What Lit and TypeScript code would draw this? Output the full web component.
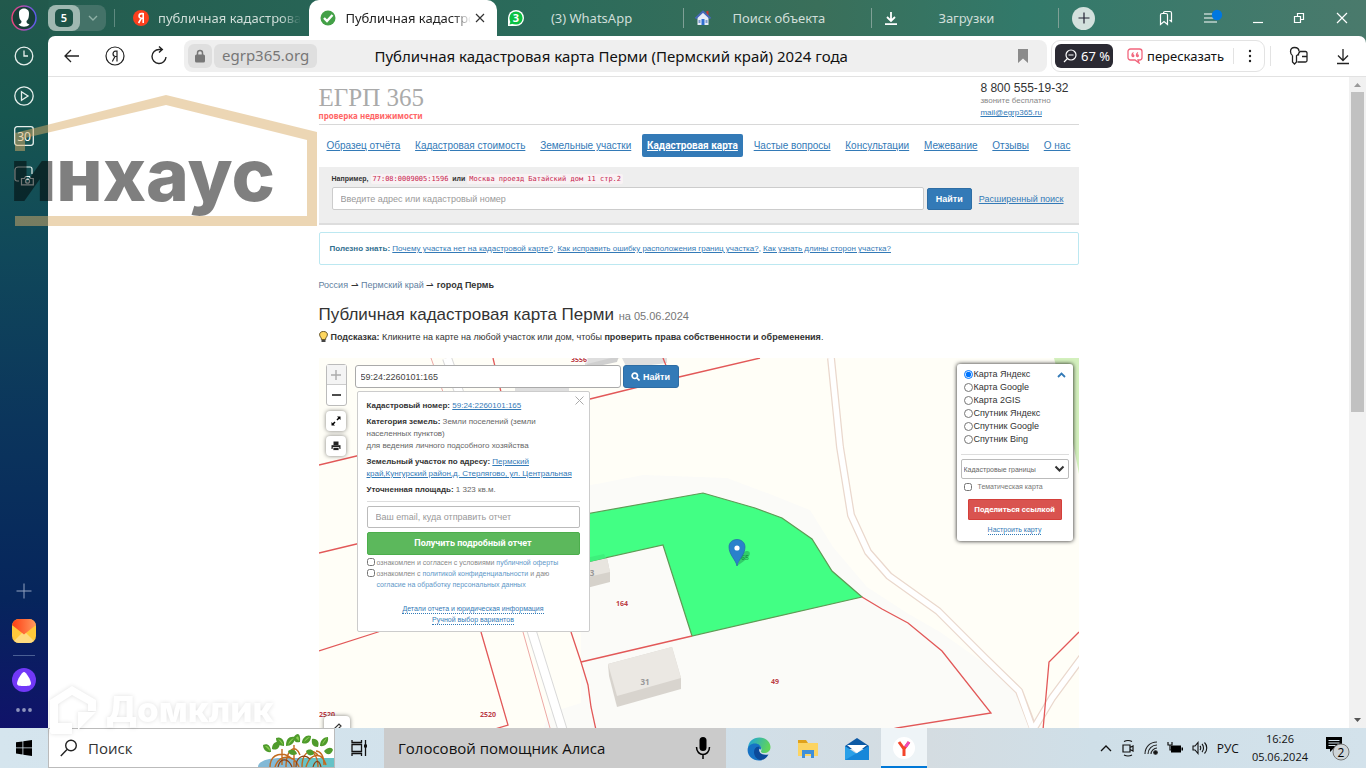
import { html, svg, css, LitElement } from 'lit';
import { customElement, state } from 'lit/decorators.js';

interface Tab {
  label: string;
  icon: any;
  active?: boolean;
  long?: boolean;
}

const base = css`
  * {
    box-sizing: border-box;
  }

  button {
    font: inherit;
    color: inherit;
    background: none;
    border: 0;
    padding: 0;
    margin: 0;
  }

  input,
  select {
    font: inherit;
    margin: 0;
  }

  svg {
    display: block;
    flex: none;
  }
`;

const yandexIcon = html`
  <svg width="18" height="18" viewBox="0 0 18 18">
    <circle cx="9" cy="9" r="8" fill="#fc3f1d" />
    <path d="M11.2 4v10M11.2 4.6H9.4c-3 0-3.2 4.6 0 4.6h1.8M9.4 9.2 6.6 14" fill="none" stroke="#fff" stroke-width="1.6" />
  </svg>
`;

const checkIcon = html`
  <svg width="18" height="18" viewBox="0 0 18 18">
    <circle cx="9" cy="9" r="7.5" fill="#43a047" />
    <path d="m5 9 3 3 5.5-6" fill="none" stroke="#fff" stroke-width="2.4" />
  </svg>
`;

const whatsappIcon = html`
  <svg width="18" height="18" viewBox="0 0 18 18">
    <path d="M1 17V9a8 8 0 1 1 8 8z" fill="#fff" />
    <circle cx="9" cy="9" r="6.6" fill="#0cc143" />
    <path d="M2.500 15.500 4 11l3 3.500z" fill="#0cc143" />
    <text x="9" y="13" text-anchor="middle" font-family="Noto Sans" font-size="11" font-weight="700" fill="#fff">3</text>
  </svg>
`;

const houseIcon = html`
  <svg width="18" height="18" viewBox="0 0 18 18">
    <path d="M12.500 2h2v5h-2z" fill="#c33" />
    <path d="M3.500 8 9 3l5.500 5v8h-11z" fill="#e6ecf7" />
    <path d="M7.500 10h3v6h-3z" fill="#2f6fd0" />
    <path d="m1.500 9.500 7.500-7 7.500 7" fill="none" stroke="#4668b8" stroke-width="2" />
    <path d="M4.500 11h2v3h-2zM11.500 11h2v3h-2z" fill="#7d9ad0" />
  </svg>
`;

const loadIcon = html`
  <svg width="18" height="18" viewBox="0 0 18 18" fill="none" stroke="#fff" stroke-width="1.8">
    <path d="M9 3v8.500M5 8l4 4 4-4M3 15.200h12" />
  </svg>
`;

@customElement('tab-strip')
export class TabStrip extends LitElement {
  tabs: Tab[] = [
    { label: 'публичная кадастровая карта', icon: yandexIcon, long: true },
    { label: 'Публичная кадастровая карта', icon: checkIcon, active: true },
    { label: '(3) WhatsApp', icon: whatsappIcon },
    { label: 'Поиск объекта', icon: houseIcon },
    { label: 'Загрузки', icon: loadIcon },
  ];

  static styles = [
    base,
    css`
      :host {
        display: flex;
        align-items: center;
        height: 36px;
        font: 13px 'Noto Sans', sans-serif;
        color: #cfded9;
      }

      .avatar {
        width: 48px;
        display: flex;
        justify-content: center;
      }

      .group {
        display: flex;
        align-items: center;
        width: 58px;
        height: 26px;
        border-radius: 8px;
        background: #447268;
      }

      .count {
        width: 32px;
        height: 26px;
        display: grid;
        place-items: center;
        border-radius: 8px;
        background: #9fb8b1;
      }

      .badge {
        width: 18px;
        height: 18px;
        border-radius: 5px;
        background: #1d5347;
        color: #fff;
        font-size: 11px;
        font-weight: 600;
        line-height: 18px;
        text-align: center;
      }

      .more {
        flex: 1;
        display: flex;
        justify-content: center;
      }

      .tabs {
        display: flex;
        flex: 0 1 945px;
        min-width: 0;
        height: 36px;
        margin-left: 8px;
        padding-left: 8px;
        background: linear-gradient(#5f8a80, #5f8a80) left center / 1px 18px no-repeat;
      }

      .tab {
        flex: 1;
        min-width: 0;
        display: flex;
        align-items: center;
        gap: 8px;
        padding: 0 8px 0 10px;
        background: linear-gradient(#7fa096, #7fa096) right center / 1px 20px no-repeat;
      }

      .tab.long,
      .tab.active {
        background: none;
      }

      .label {
        flex: 1;
        min-width: 0;
        margin-right: 26px;
        overflow: hidden;
        white-space: nowrap;
        text-align: center;
      }

      .tab.long .label,
      .tab.active .label {
        margin-right: 0;
        text-align: left;
        mask-image: linear-gradient(90deg, #000 86%, transparent);
      }

      .tab.active .label {
        margin-right: -8px;
      }

      .tab.active {
        background: #fff;
        color: #222;
        border-radius: 10px 10px 0 0;
      }

      .plus {
        margin-left: 13px;
        width: 23px;
        height: 23px;
        border-radius: 12px;
        background: #d3e1dd;
        display: grid;
        place-items: center;
      }

      .window {
        margin-left: auto;
        display: flex;
        align-items: center;
        padding-right: 16px;
        gap: 29px;
      }
    `,
  ];

  render() {
    return html`
      <button class="avatar" aria-label="Профиль">
        <svg width="28" height="28" viewBox="0 0 28 28">
          <defs>
            <linearGradient id="ring"><stop stop-color="#f0457a" /><stop offset="1" stop-color="#5a5cf0" /></linearGradient>
          </defs>
          <circle cx="14" cy="14" r="12" fill="#173f38" stroke="url(#ring)" stroke-width="1.400" />
          <path d="M9 9c0-6 10-6 10 0 0 5-1 7-2.500 8 0 2 .5 2.500 3 3.500-3 3-8 3-11 0 2.500-1 3-1.500 3-3.500C10 16 9 14 9 9z" fill="#fff" />
        </svg>
      </button>
      <div class="group">
        <button class="count"><span class="badge">5</span></button>
        <button class="more" aria-label="Группы вкладок">
          <svg width="10" height="6" viewBox="0 0 10 6" fill="none" stroke="#8fb0a6" stroke-width="1.400"><path d="m1 1 4 4 4-4" /></svg>
        </button>
      </div>
      <div class="tabs">
        ${this.tabs.map(
          (tab) => html`
            <button class="tab ${tab.active ? 'active' : ''} ${tab.long ? 'long' : ''}">
              ${tab.icon}
              <span class="label">${tab.label}</span>
              ${tab.active
                ? html`<svg width="18" height="18" viewBox="0 0 18 18" stroke="#333" stroke-width="1.200"><path d="m5 5 8 8M13 5l-8 8" /></svg>`
                : ''}
            </button>
          `
        )}
      </div>
      <button class="plus" aria-label="Новая вкладка">
        <svg width="12" height="12" viewBox="0 0 12 12" stroke="#223" stroke-width="1.200"><path d="M6 .5v11M.5 6h11" /></svg>
      </button>
      <div class="window">
        <button aria-label="Закладки">
          <svg width="16" height="16" viewBox="0 0 16 16" fill="none" stroke="#fff" stroke-width="1.200">
            <path d="M2.500 5c0-1 .5-1.500 1.500-1.500h4c1 0 1.500.5 1.500 1.500v9.500L6 11.500l-3.500 3z" />
            <path d="M5.500 3.500c0-1.300.7-2 1.700-2H12c1 0 1.500.5 1.500 1.500v8.500l-2-1.500" />
          </svg>
        </button>
        <button aria-label="Меню">
          <svg width="20" height="18" viewBox="0 0 20 18" fill="none" stroke="#fff" stroke-width="1.200">
            <path d="M1 5h9M1 9h11M1 13h13" />
            <circle cx="14" cy="6" r="5.200" fill="#0077e0" stroke="none" />
          </svg>
        </button>
        <button aria-label="Свернуть">
          <svg width="12" height="12" viewBox="0 0 12 12" stroke="#fff" stroke-width="1.200"><path d="M1 10.500h10" /></svg>
        </button>
        <button aria-label="Развернуть">
          <svg width="12" height="12" viewBox="0 0 12 12" fill="none" stroke="#fff" stroke-width="1.200">
            <path d="M1.500 4.500h6v6h-6zM4.500 4.500v-3h6v6h-3" />
          </svg>
        </button>
        <button aria-label="Закрыть">
          <svg width="16" height="14" viewBox="0 0 16 14" stroke="#fff" stroke-width="1.200"><path d="m3 2 10 10M13 2 3 12" /></svg>
        </button>
      </div>
    `;
  }
}

@customElement('side-rail')
export class SideRail extends LitElement {
  static styles = [
    base,
    css`
      :host {
        display: flex;
        flex-direction: column;
        align-items: center;
        width: 48px;
        padding: 10px 0 12px;
      }

      .top {
        display: flex;
        flex-direction: column;
        gap: 20px;
      }

      .bottom {
        margin-top: auto;
        display: flex;
        flex-direction: column;
        align-items: center;
        gap: 12px;
      }

      .plus {
        margin-bottom: 8px;
      }

      .rule {
        width: 22px;
        height: 1px;
        background: #4a5f94;
      }
    `,
  ];

  render() {
    return html`
      <div class="top">
        <button aria-label="История">
          <svg width="20" height="20" viewBox="0 0 20 20" fill="none" stroke="#e6efec" stroke-width="1.300">
            <circle cx="10" cy="10" r="8.800" /><path d="M10 4.500V10h4" />
          </svg>
        </button>
        <button aria-label="Видео">
          <svg width="20" height="20" viewBox="0 0 20 20" fill="none" stroke="#e6efec" stroke-width="1.300">
            <circle cx="10" cy="10" r="9.200" /><path d="m7.500 5.800 6.500 4.200-6.500 4.200z" />
          </svg>
        </button>
        <button aria-label="Календарь">
          <svg width="20" height="20" viewBox="0 0 20 20" fill="none" stroke="#e6efec" stroke-width="1.300">
            <rect x=".7" y=".7" width="18.600" height="18.600" rx="2.500" />
            <text x="10" y="14.500" text-anchor="middle" font-family="Noto Sans" font-size="12" stroke="none" fill="#fff">30</text>
          </svg>
        </button>
        <button aria-label="Скриншот">
          <svg width="20" height="20" viewBox="0 0 20 20" fill="none" stroke="#e6efec" stroke-width="1.200">
            <path d="M5 15H3a2 2 0 0 1-2-2V4a3 3 0 0 1 3-3h12a2 2 0 0 1 2 2v5" />
            <path d="M7.500 12.500h3l1-2h4l1 2h2.800v6.300H7.500z" /><circle cx="13.500" cy="15.200" r="2" />
          </svg>
        </button>
      </div>
      <div class="bottom">
        <button class="plus" aria-label="Добавить">
          <svg width="16" height="16" viewBox="0 0 16 16" stroke="#93a3c0"><path d="M8 .5v15M.5 8h15" /></svg>
        </button>
        <button aria-label="Почта">
          <svg width="24" height="24" viewBox="0 0 24 24">
            <defs>
              <linearGradient id="flap" x2="1"><stop stop-color="#ff3d12" /><stop offset="1" stop-color="#ff9a60" /></linearGradient>
              <clipPath id="mail"><rect width="24" height="24" rx="7" /></clipPath>
            </defs>
            <g clip-path="url(#mail)">
              <path d="M0 0h24v24H0z" fill="#ffc83a" />
              <path d="m0 24 12-12 12 12z" fill="#ffdb80" />
              <path d="M0 0h24v6L12 15.500 0 6z" fill="url(#flap)" />
            </g>
          </svg>
        </button>
        <span class="rule"></span>
        <button aria-label="Алиса">
          <svg width="24" height="24" viewBox="0 0 24 24">
            <circle cx="12" cy="12" r="12" fill="#7138f8" />
            <path d="M12 4c2 0 7 8 7 11.500C19 18 15.500 18 12 18s-7 0-7-2.500C5 12 10 4 12 4z" fill="#fff" />
          </svg>
        </button>
        <button aria-label="Ещё">
          <svg width="16" height="12" viewBox="0 0 16 12" fill="#8e94bd">
            <circle cx="2" cy="6" r="1.900" /><circle cx="8" cy="6" r="1.900" /><circle cx="14" cy="6" r="1.900" />
          </svg>
        </button>
      </div>
    `;
  }
}

@customElement('address-bar')
export class AddressBar extends LitElement {
  static styles = [
    base,
    css`
      :host {
        display: flex;
        align-items: center;
        height: 41px;
        padding: 0 15px;
        border-bottom: 1px solid #e2e2e2;
        font: 15px 'Noto Sans', sans-serif;
        color: #111;
      }

      .nav {
        display: flex;
        align-items: center;
        gap: 24px;
        width: 121px;
      }

      .field {
        flex: 1;
        min-width: 0;
        display: flex;
        align-items: center;
        height: 32px;
        padding: 0 18px 0 4px;
        border-radius: 8px;
        background: #efefef;
      }

      .lock {
        width: 24px;
        height: 24px;
        display: grid;
        place-items: center;
        border-radius: 6px;
        background: #dfdfdf;
      }

      .host {
        height: 24px;
        margin-left: 2px;
        padding: 0 8px;
        border-radius: 6px;
        background: #dfdfdf;
        color: #777;
        line-height: 23px;
      }

      .title {
        flex: 1;
        padding-right: 112px;
        overflow: hidden;
        white-space: nowrap;
        text-align: center;
      }

      .tools {
        display: flex;
        align-items: center;
        height: 32px;
        margin-left: 4px;
        padding: 0 11px 0 3px;
        border: 1px solid #e3e3e3;
        border-radius: 9px;
        font-size: 13px;
      }

      .zoom {
        display: flex;
        align-items: center;
        gap: 4px;
        height: 24px;
        width: 58px;
        padding: 0 5px 0 8px;
        border-radius: 6px;
        background: #2b2a33;
        color: #fff;
        white-space: nowrap;
      }

      .retell {
        display: flex;
        align-items: center;
        gap: 4px;
        margin-left: 14px;
      }

      .dots {
        margin-left: 9px;
        padding-left: 13px;
        border-left: 1px solid #e3e3e3;
      }

      .right {
        display: flex;
        align-items: center;
        gap: 26px;
        margin-left: 5px;
        padding-left: 18px;
        border-left: 1px solid #e3e3e3;
      }
    `,
  ];

  render() {
    return html`
      <div class="nav">
        <button aria-label="Назад">
          <svg width="18" height="18" viewBox="0 0 18 18" fill="none" stroke="#222" stroke-width="1.300"><path d="M16 9H2M8 3 2 9l6 6" /></svg>
        </button>
        <button aria-label="Яндекс">
          <svg width="20" height="20" viewBox="0 0 20 20" fill="none" stroke="#222" stroke-width="1.200">
            <circle cx="10" cy="10" r="9" /><path d="M12 4.500v11M12 5.200h-1.500c-3.300 0-3.300 5.300 0 5.300H12M10 10.500l-2.700 5" />
          </svg>
        </button>
        <button aria-label="Обновить">
          <svg width="20" height="20" viewBox="0 0 20 20" fill="none" stroke="#222" stroke-width="1.400">
            <path d="M17 11a7 7 0 1 1-7-7.500h3M10 .5l3.300 3L10 6.500" />
          </svg>
        </button>
      </div>
      <div class="field">
        <button class="lock" aria-label="Защита">
          <svg width="12" height="14" viewBox="0 0 12 14">
            <rect x="1" y="5.500" width="10" height="8" rx="1.500" fill="#777" />
            <path d="M3.500 6V4a2.500 2.500 0 0 1 5 0v2" fill="none" stroke="#777" stroke-width="1.500" />
          </svg>
        </button>
        <span class="host">egrp365.org</span>
        <span class="title">Публичная кадастровая карта Перми (Пермский край) 2024 года</span>
        <button aria-label="В закладки">
          <svg width="12" height="14" viewBox="0 0 12 14"><path d="M1 0h10v14l-5-4.500L1 14z" fill="#8b8b8b" /></svg>
        </button>
      </div>
      <div class="tools">
        <button class="zoom">
          <svg width="14" height="14" viewBox="0 0 14 14" fill="none" stroke="#fff" stroke-width="1.200">
            <circle cx="8" cy="6" r="5" /><path d="M5.500 6h5M4.500 9.500 1 13" />
          </svg>
          67 %
        </button>
        <button class="retell">
          <svg width="16" height="16" viewBox="0 0 16 16" fill="none" stroke="#f2667d" stroke-width="1.300">
            <path d="M3.500 1h9C14.500 1 15 2 15 3.500v6c0 1.500-1 2.500-2.500 2.500H11l1 3-4-3H3.500C2 12 1 11 1 9.500v-6C1 2 2 1 3.500 1z" />
            <path d="M6.500 4.500c-2 1-2 4.200-.4 4 1.200-.2.800-2-.8-1.700M11 4.500c-2 1-2 4.200-.4 4 1.200-.2.800-2-.8-1.700" />
          </svg>
          пересказать
        </button>
        <button class="dots" aria-label="Ещё">
          <svg width="6" height="16" viewBox="0 0 6 16" fill="#222"><circle cx="3" cy="3" r="1.200" /><circle cx="3" cy="8" r="1.200" /><circle cx="3" cy="13" r="1.200" /></svg>
        </button>
      </div>
      <div class="right">
        <button aria-label="Пароли">
          <svg width="20" height="20" viewBox="0 0 20 20" fill="none" stroke="#222" stroke-width="1.300">
            <path d="M3.500 9.500C2 8.500 1.500 7 1.500 5.500 1.500 3 3 1.500 5.500 1.500S10 3 10 5.500M3.500 9.500V16l2 2 2-2V9.800L9 8.500" />
            <path d="M8.500 16h8c1 0 1.500-.5 1.500-1.500V7c0-1-.5-1.500-1.500-1.500H11L9.500 7.500v2M13 10.500h5" />
          </svg>
        </button>
        <button aria-label="Загрузки">
          <svg width="16" height="18" viewBox="0 0 16 18" fill="none" stroke="#222" stroke-width="1.300"><path d="M8 2v11M3 8.500l5 5 5-5M2 16.500h12" /></svg>
        </button>
      </div>
    `;
  }
}

@customElement('parcel-map')
export class ParcelMap extends LitElement {
  @state() layer = 'Карта Яндекс';

  layers = ['Карта Яндекс', 'Карта Google', 'Карта 2GIS', 'Спутник Яндекс', 'Спутник Google', 'Спутник Bing'];

  borders = [
    'M271 41 360 19 441 0',
    'M174 0 182 34',
    'M344 0 348 10',
    'M0 107 50 95',
    'M0 195 50 183',
    'M0 293 59 274 90 262',
    'M162 274 189 367 176 371',
    'M252 274 262 304 269 327 272 349 277 372',
    'M262 304 373 278',
    'M543 239 563 251 589 265 623 293 672 355 578 370 540 378',
    'M760 274 730 304 724 372',
  ];

  plots = [
    { x: 260, y: 4, text: '3556' },
    { x: 303, y: 248, text: '164' },
    { x: 456, y: 326, text: '49' },
    { x: 8, y: 359, text: '2520' },
    { x: 169, y: 359, text: '2520' },
  ];

  static styles = [
    base,
    css`
      :host {
        display: block;
        position: relative;
        height: 440px;
        overflow: hidden;
        background: #fffef7;
        font: 8px 'Liberation Sans', Arial, sans-serif;
      }

      a {
        color: #337ab7;
      }

      .canvas {
        width: 100%;
        height: 440px;
      }

      .controls {
        position: absolute;
        top: 6px;
        left: 7px;
        display: flex;
        flex-direction: column;
        gap: 5px;
      }

      .zoom {
        border: 1px solid #bbb;
        border-radius: 3px;
        background: #fff;
      }

      .zoom button {
        display: grid;
        place-items: center;
        width: 19px;
        height: 20px;
      }

      .zoom button:first-child {
        background: #f4f4f4;
        border-bottom: 1px solid #ccc;
      }

      .tool {
        display: grid;
        place-items: center;
        width: 20px;
        height: 20px;
        border-radius: 4px;
        background: #fff;
        box-shadow: 0 0 4px rgba(0, 0, 0, 0.5);
      }

      .draw {
        position: absolute;
        left: 5px;
        top: 358px;
        width: 26px;
        height: 24px;
      }

      .find {
        position: absolute;
        top: 7px;
        left: 36px;
        display: flex;
        gap: 2px;
        font-size: 9px;
      }

      .find input {
        width: 266px;
        height: 23px;
        padding: 0 5px;
        border: 1px solid #aaa;
        border-radius: 3px;
        color: #444;
      }

      .find button {
        display: flex;
        align-items: center;
        justify-content: center;
        gap: 3px;
        width: 56px;
        height: 23px;
        border: 1px solid #2e6da4;
        border-radius: 3px;
        background: #337ab7;
        color: #fff;
        font-weight: 700;
      }

      .popup {
        position: absolute;
        top: 33px;
        left: 38px;
        width: 233px;
        height: 241px;
        padding: 8px 9px;
        border: 1px solid #ccc;
        border-radius: 2px;
        background: #fff;
        color: #666;
        line-height: 12px;
      }

      .popup p {
        margin: 0 0 4px;
      }

      .popup b {
        color: #333;
      }

      .close {
        float: right;
        margin-top: -4px;
        margin-right: -4px;
      }

      .order {
        display: flex;
        flex-direction: column;
        margin-top: 5px;
        padding-top: 4px;
        border-top: 1px solid #ddd;
        font-size: 7px;
        line-height: 11px;
      }

      .order > input {
        height: 22px;
        margin-bottom: 4px;
        padding: 0 8px;
        border: 1px solid #bbb;
        border-radius: 2px;
        font-size: 9px;
      }

      .order > button {
        height: 23px;
        margin-bottom: 2px;
        border: 1px solid #4cae4c;
        border-radius: 2px;
        background: #5cb85c;
        color: #fff;
        font-family: Roboto, sans-serif;
        font-size: 9px;
        font-weight: 700;
      }

      input::placeholder {
        color: #999;
        opacity: 1;
      }

      .order label {
        display: flex;
        gap: 2px;
        color: #888;
      }

      .order label a {
        color: #5e97c8;
        text-decoration: none;
      }

      input[type='checkbox'] {
        width: 8px;
        height: 8px;
        margin: 1px 0 0;
      }

      .dotted {
        color: #337ab7;
        text-decoration: none;
        border-bottom: 1px dotted #337ab7;
      }

      .extra {
        display: flex;
        flex-direction: column;
        align-items: center;
        gap: 1px;
        margin-top: 14px;
        line-height: 9px;
        font-size: 7px;
      }

      .layers {
        position: absolute;
        top: 6px;
        right: 6px;
        width: 116px;
        padding: 4px 4px 6px;
        border-radius: 3px;
        background: #fff;
        box-shadow: 0 0 4px rgba(0, 0, 0, 0.9);
        color: #333;
      }

      .modes {
        display: grid;
        grid-template-columns: 1fr 12px;
        margin: 0;
        padding: 0 0 8px 3px;
        border: 0;
        border-bottom: 1px solid #ddd;
        font-size: 9px;
        line-height: 13px;
      }

      .modes label {
        display: flex;
        align-items: center;
        gap: 1px;
        grid-column: 1;
        height: 13px;
      }

      .modes svg {
        grid-column: 2;
        grid-row: 1;
        margin-top: 4px;
      }

      input[type='radio'] {
        width: 9px;
        height: 9px;
        margin: 0;
        accent-color: #0075ff;
      }

      .select {
        display: grid;
        align-items: center;
        margin-top: 4px;
      }

      .select select {
        grid-area: 1 / 1;
        width: 100%;
        height: 20px;
        padding: 0 2px;
        appearance: none;
        border: 1px solid #bbb;
        border-radius: 2px;
        background: #fff;
        color: #666;
        font-size: 7px;
      }

      .select svg {
        grid-area: 1 / 1;
        justify-self: end;
        margin-right: 4px;
        pointer-events: none;
      }

      .theme {
        display: flex;
        gap: 6px;
        margin: 3px 0 7px 3px;
        font-size: 7px;
        line-height: 10px;
        color: #777;
      }

      .share {
        display: block;
        width: 94px;
        height: 21px;
        margin: 0 auto 5px;
        border: 1px solid #d43f3a;
        border-radius: 1px;
        background: #d9534f;
        color: #fff;
        font-family: Roboto, sans-serif;
        font-weight: 700;
      }

      .setup {
        display: block;
        width: fit-content;
        margin: 0 auto;
        font-size: 7px;
        line-height: 9px;
      }

      .canvas text {
        font-family: 'Open Sans', sans-serif;
        font-weight: 700;
        text-anchor: middle;
      }
    `,
  ];

  renderCanvas() {
    return html`
      <svg class="canvas" viewBox="0 0 760 440" preserveAspectRatio="xMinYMin slice">
        <path d="M735 0H760V116L754 85 745 40z" fill="#d3f0bd" />
        <path d="M230 355 262 345 262 129 324 117 408 120 448 135 491 152 514 189 548 229 588 255 621 274 668 307 698 335 714 372V440H200z" fill="#fbfbf8" />
        <g fill="none" stroke-linejoin="round">
          <path d="M128 0 140 34 213 274 243 370 262 440" stroke="#d9d9d9" stroke-width="10" />
          <path d="M128 0 140 34 213 274 243 370 262 440" stroke="#fff" stroke-width="8" />
          <g stroke="#ead8cd" stroke-width="8">
            <path d="M512 0 521 89 532 157 549 194 570 218 619 253 666 300 700 333 714 370" />
            <path d="M714 372 733 340 764 298" />
          </g>
          <g stroke="#fff" stroke-width="5.500">
            <path d="M512 0 521 89 532 157 549 194 570 218 619 253 666 300 700 333 714 372 733 340 764 298" />
          </g>
          <path d="M112 0 124 34 204 274 231 370" stroke="#eda8a4" />
        </g>
        <g fill="#dedede">
          <path d="M266 0h35l-35 9zM303 0h45v5l-40 5z" />
          <path d="M196 29h54v5h-54z" />
        </g>
        <path d="M268 6 300 -2 298 4 270 10z" fill="#cfcfcf" />
        <path d="M260 206 288 200 291 214V224L260 232z" fill="#d6d2cb" />
        <path d="M260 206 288 200 291 214 260 221z" fill="#e8e5df" />
        <path d="M289 306 353 289 362 320V331L298 349 290 318z" fill="#d8d4ce" />
        <path d="M289 306 353 289 362 320 298 338z" fill="#ebe8e3" />
        <path d="M250 159 384 135 436 150 463 160 493 181 513 213 543 239 373 278 344 187 250 208z" fill="#42ff84" stroke="#5f9a55" stroke-width="1.200" />
        <path d="M262 201 285 196 287 200 262 206z" fill="#3ef07c" />
        <g fill="none" stroke="#e25858" stroke-width="1.300">${this.borders.map((d) => svg`<path d=${d} />`)}</g>
        <g fill="#bb3d45" stroke="#fff" stroke-width="1.500" paint-order="stroke" font-size="7">
          ${this.plots.map((p) => svg`<text x=${p.x} y=${p.y}>${p.text}</text>`)}
        </g>
        <g fill="#999" font-size="8"><text x="273" y="218">3</text><text x="326" y="327">31</text></g>
        <text x="424" y="202" font-size="7" fill="#178a3e" opacity=".6">165</text>
        <path d="m418 208 6-13c4-4 9-1 6 3-2 3-9 8-12 10z" fill="#0a5a2a" opacity=".3" />
        <path d="M418 208c-1-6-8-11-8-19 0-10 16-10 16 0 0 8-7 13-8 19z" fill="#2a81cb" stroke="#2468a8" stroke-width=".7" />
        <circle cx="418" cy="190" r="2.600" fill="#fff" />
      </svg>
    `;
  }

  render() {
    return html`
      ${this.renderCanvas()}
      <div class="controls">
        <div class="zoom">
          <button aria-label="Приблизить">
            <svg width="10" height="10" viewBox="0 0 10 10" stroke="#aaa" stroke-width="1.400"><path d="M5 0v10M0 5h10" /></svg>
          </button>
          <button aria-label="Отдалить">
            <svg width="10" height="10" viewBox="0 0 10 10" stroke="#000" stroke-width="1.400"><path d="M1 5h9" /></svg>
          </button>
        </div>
        <button class="tool" aria-label="На весь экран">
          <svg width="10" height="10" viewBox="0 0 10 10"><path d="M9.500.500V4L6 .500zM.5 9.500V6L4 9.500z" /><path d="M8 2 6 4M2 8l2-2" stroke="#000" stroke-width="1.500" /></svg>
        </button>
        <button class="tool" aria-label="Печать">
          <svg width="10" height="10" viewBox="0 0 10 10"><path d="M2.500.500h5V4h-5z" fill="#222" /><path d="M.5 4.200h9V8h-9z" fill="#222" /><path d="M2 6.500h6V9.500H2z" fill="#222" stroke="#fff" stroke-width=".8" /></svg>
        </button>
      </div>
      <form class="find">
        <input type="text" aria-label="Кадастровый номер" value="59:24:2260101:165" />
        <button type="button">
          <svg width="9" height="9" viewBox="0 0 9 9" fill="none" stroke="#fff" stroke-width="1.700"><circle cx="3.800" cy="3.800" r="2.700" /><path d="m6 6 2.500 2.500" /></svg>
          Найти
        </button>
      </form>
      <section class="popup">
        <button class="close" aria-label="Закрыть">
          <svg width="9" height="9" viewBox="0 0 9 9" stroke="#aaa"><path d="m.5.500 8 8M8.500.500l-8 8" /></svg>
        </button>
        <p><b>Кадастровый номер:</b> <a href="#">59:24:2260101:165</a></p>
        <p><b>Категория земель:</b> Земли поселений (земли<br />населенных пунктов)<br />для ведения личного подсобного хозяйства</p>
        <p><b>Земельный участок по адресу:</b> <a href="#">Пермский<br />край,Кунгурский район,д. Стерлягово, ул. Центральная</a></p>
        <p><b>Уточненная площадь:</b> 1 323 кв.м.</p>
        <form class="order">
          <input type="email" aria-label="Email" placeholder="Ваш email, куда отправить отчет" />
          <button type="button">Получить подробный отчет</button>
          <label><input type="checkbox" /><span>ознакомлен и согласен с условиями <a href="#">публичной оферты</a></span></label>
          <label>
            <input type="checkbox" />
            <span>ознакомлен с <a href="#">политикой конфиденциальности</a> и даю<br /><a href="#">согласие на обработку персональных данных</a></span>
          </label>
        </form>
        <div class="extra">
          <a class="dotted" href="#">Детали отчета и юридическая информация</a>
          <a class="dotted" href="#">Ручной выбор вариантов</a>
        </div>
      </section>
      <section class="layers">
        <fieldset class="modes">
          ${this.layers.map(
            (name) => html`
              <label>
                <input type="radio" name="layer" .checked=${this.layer === name} @change=${() => (this.layer = name)} />
                ${name}
              </label>
            `
          )}
          <svg width="9" height="6" viewBox="0 0 9 6" fill="none" stroke="#337ab7" stroke-width="1.800"><path d="m1 5 3.500-3.500L8 5" /></svg>
        </fieldset>
        <div class="select">
          <select aria-label="Слой"><option>Кадастровые границы</option></select>
          <svg width="11" height="8" viewBox="0 0 11 8" fill="none" stroke="#333" stroke-width="2"><path d="m1.500 1.500 4 4 4-4" /></svg>
        </div>
        <label class="theme"><input type="checkbox" />Тематическая карта</label>
        <button class="share">Поделиться ссылкой</button>
        <a class="dotted setup" href="#">Настроить карту</a>
      </section>
      <button class="tool draw" aria-label="Рисовать">
        <svg width="10" height="10" viewBox="0 0 10 10" fill="none" stroke="#333" stroke-width="1.200"><path d="m1 9 1-3 5-5 2 2-5 5z" /></svg>
      </button>
    `;
  }
}

@customElement('site-page')
export class SitePage extends LitElement {
  menu = [
    'Образец отчёта',
    'Кадастровая стоимость',
    'Земельные участки',
    'Кадастровая карта',
    'Частые вопросы',
    'Консультации',
    'Межевание',
    'Отзывы',
    'О нас',
  ];

  static styles = [
    base,
    css`
      :host {
        display: block;
        max-width: 760px;
        margin: 0 auto;
        font: 9px 'Liberation Sans', Arial, sans-serif;
        color: #333;
      }

      a {
        color: #337ab7;
      }

      header {
        display: flex;
        justify-content: space-between;
        height: 48px;
        padding: 4px 10px 0 0;
        border-bottom: 1px solid #d8d8d8;
      }

      .logo {
        color: #aaa;
        font: 25px/28px 'Liberation Serif', serif;
        padding-top: 3px;
      }

      .slogan {
        color: #f66;
        font: bold 8px/8px 'Noto Sans', sans-serif;
      }

      .contact {
        font-size: 8px;
        line-height: 12px;
        color: #888;
      }

      .phone {
        font-size: 12px;
        line-height: 14px;
        color: #333;
      }

      nav {
        display: flex;
        align-items: center;
        justify-content: space-between;
        height: 42px;
        padding: 0 8px 1px;
        font-size: 10px;
      }

      nav .current {
        margin: 0 -4px;
        padding: 0 5px;
        border-radius: 2px;
        background: #337ab7;
        color: #fff;
        font-family: Roboto, sans-serif;
        font-weight: 700;
        line-height: 23px;
      }

      .search {
        padding: 6px 13px 13px;
        border-bottom: 2px solid #ddd;
        background: #eee;
      }

      .sample {
        height: 14px;
        font-size: 7px;
        font-weight: 700;
        line-height: 11px;
      }

      code {
        padding: 1px 2px;
        border-radius: 2px;
        background: #f9f2f4;
        color: #c7254e;
        font: 7px 'DejaVu Sans Mono', monospace;
      }

      .row {
        display: flex;
        align-items: center;
        gap: 3px;
      }

      .row input {
        flex: 1;
        min-width: 0;
        height: 23px;
        padding: 0 8px;
        border: 1px solid #ccc;
        border-radius: 2px;
      }

      .row input::placeholder {
        color: #999;
        opacity: 1;
      }

      .row button {
        width: 45px;
        height: 22px;
        border: 1px solid #2e6da4;
        border-radius: 2px;
        background: #337ab7;
        color: #fff;
        font-weight: 700;
      }

      .row a {
        margin-left: 4px;
        margin-right: 2px;
      }

      .tips {
        margin-top: 7px;
        padding: 0 10px;
        border: 1px solid #bce8f1;
        border-radius: 2px;
        color: #31708f;
        font-size: 8px;
        line-height: 31px;
      }

      .crumbs {
        margin-top: 13px;
        line-height: 14px;
      }

      .crumbs a {
        color: #5f7f9f;
        text-decoration: none;
      }

      h1 {
        margin: 12px 0 0;
        font-size: 17px;
        font-weight: 400;
        line-height: 22px;
      }

      h1 small {
        color: #777;
        font-size: 11px;
      }

      .hint {
        display: flex;
        align-items: center;
        gap: 3px;
        margin-bottom: 11px;
        height: 20px;
      }
    `,
  ];

  render() {
    return html`
      <header>
        <div>
          <div class="logo">ЕГРП 365</div>
          <div class="slogan">проверка недвижимости</div>
        </div>
        <div class="contact">
          <div class="phone">8 800 555-19-32</div>
          <div>звоните бесплатно</div>
          <a href="#">mail@egrp365.ru</a>
        </div>
      </header>
      <nav>
        ${this.menu.map((item) => html`<a class=${item === 'Кадастровая карта' ? 'current' : ''} href="#">${item}</a>`)}
      </nav>
      <form class="search">
        <div class="sample">Например, <code>77:08:0009005:1596</code> или <code>Москва проезд Батайский дом 11 стр.2</code></div>
        <div class="row">
          <input type="text" aria-label="Адрес" placeholder="Введите адрес или кадастровый номер" />
          <button type="button">Найти</button>
          <a href="#">Расширенный поиск</a>
        </div>
      </form>
      <div class="tips">
        <b>Полезно знать:</b>
        <a href="#">Почему участка нет на кадастровой карте?</a>,
        <a href="#">Как исправить ошибку расположения границ участка?</a>,
        <a href="#">Как узнать длины сторон участка?</a>
      </div>
      <div class="crumbs"><a href="#">Россия</a> ⇀ <a href="#">Пермский край</a> ⇀ <b>город Пермь</b></div>
      <h1>Публичная кадастровая карта Перми <small>на 05.06.2024</small></h1>
      <div class="hint">
        <svg width="9" height="12" viewBox="0 0 9 12">
          <path d="M4.500.500c5 0 4.500 4.500 2.200 6.500v1.500H2.300V7C0 5 -.5.500 4.500.500z" fill="#ffd75e" stroke="#5c4a1c" stroke-width=".9" />
          <path d="M2.500 9h4v2h-4z" fill="#444" />
        </svg>
        <span><b>Подсказка:</b> Кликните на карте на любой участок или дом, чтобы <b>проверить права собственности и обременения</b>.</span>
      </div>
      <parcel-map></parcel-map>
    `;
  }
}

@customElement('task-bar')
export class TaskBar extends LitElement {
  static styles = [
    base,
    css`
      :host {
        display: flex;
        height: 40px;
        background: linear-gradient(90deg, #d5e5ee, #d0e0ea 50%, #d4dce1 68%, #cfdfe8 80%, #d3e2eb);
        font: 15px 'Open Sans', sans-serif;
        color: #111;
      }

      button {
        display: grid;
        place-items: center;
      }

      .start {
        width: 48px;
      }

      .search {
        display: flex;
        align-items: center;
        gap: 10px;
        width: 287px;
        padding-left: 11px;
        border: 1px solid #bbb;
        background: #fff;
      }

      .search input {
        flex: 1;
        min-width: 0;
        border: 0;
        padding: 0;
        outline: 0;
      }

      .search input::placeholder {
        color: #333;
        opacity: 1;
      }

      .view {
        width: 49px;
      }

      .alice {
        display: flex;
        align-items: center;
        justify-content: space-between;
        width: 342px;
        padding: 0 15px 0 14px;
        background: #cbcbcb;
      }

      .apps {
        display: flex;
        padding-left: 8px;
      }

      .apps button {
        width: 49px;
        padding-top: 2px;
      }

      .apps .open {
        width: 46px;
        background: #eef4f7;
        border-bottom: 2px solid #0078d7;
      }

      .tray {
        display: flex;
        align-items: center;
        gap: 9px;
        margin-left: auto;
        padding-right: 16px;
        font-size: 12px;
      }

      .clock {
        padding: 0 8px 0 4px;
        font-size: 11px;
        line-height: 18px;
        text-align: center;
      }
    `,
  ];

  render() {
    return html`
      <button class="start" aria-label="Пуск">
        <svg width="16" height="16" viewBox="0 0 16 16"><path d="M0 2.300 6.500 1.400V7.500H0zM7.300 1.300 16 0V7.500H7.300zM0 8.300h6.500v6.200L0 13.600zM7.300 8.300H16V16L7.300 14.700z" /></svg>
      </button>
      <label class="search">
        <svg width="18" height="18" viewBox="0 0 18 18" fill="none" stroke="#222" stroke-width="1.400"><circle cx="11" cy="6.500" r="5.300" /><path d="M7 10.500.8 17" /></svg>
        <input type="text" placeholder="Поиск" />
        <svg width="76" height="38" viewBox="0 0 76 38">
          <path d="M0 38c0-6 10-9 24-9h52v9z" fill="#82b9d6" />
          <path d="M40 29h36v9H44z" fill="#66c2c6" />
          <g fill="none" stroke="#c26a1e" stroke-width="1.400">
            <path d="M12 38c0-14 14-16 22-8M17 38c4-12 18-14 24 0M28 38c0-18 10-24 14-12M36 38V16M44 38c0-14 8-20 16-12M48 38c4-14 16-16 20-2M60 38c0-9-3-14-8-17M24 36V20M66 36c0-10-4-14-8-14" />
          </g>
          <g fill="none" stroke="#8a3f10" stroke-width="1.200"><path d="M20 38c2-9 10-10 14 0M38 38c0-10 8-14 14-8M55 38c2-7 6-8 8 0" /></g>
          <g fill="#4f9b2c">
            <path d="M5 16c4-2 8 0 8 7-5 1-8-3-8-7zM14 20c0-6 4-8 8-7 0 6-3 9-8 7zM18 9c5-2 9 2 8 8-5 0-8-3-8-8zM28 17c0-7 3-10 9-9 0 6-4 9-9 9zM36 8c4-6 7-2 6 5-5 1-6-1-6-5zM44 14c0-5 5-9 9-7 0 6-4 9-9 7zM54 10c5-1 8 3 6 8-5 0-7-3-6-8zM62 17c0-6 4-9 8-9 1 6-3 10-8 9zM66 22c4-4 8-4 9-1-2 5-6 6-9 1zM48 22c4-3 8-1 8 3-4 3-7 1-8-3zM30 22c3-2 8-2 9 3-4 2-8 1-9-3z" />
          </g>
          <g fill="#8bd052"><path d="M7 17c3 0 5 2 5 5zM20 10c3 1 5 4 5 6zM30 16c1-4 3-6 6-7zM46 13c1-3 4-5 6-5zM64 16c1-4 3-6 5-7zM38 9c2-3 3-1 3 3z" /></g>
        </svg>
      </label>
      <button class="view" aria-label="Представление задач">
        <svg width="17" height="16" viewBox="0 0 17 16" fill="none" stroke="#111" stroke-width="1.300">
          <path d="M1 0v2.500h9.500V0M1 4.500h9.500v7H1zM1 16v-2.500h9.500V16M14.500 0v16" /><path d="M13 4.500h3v3h-3z" fill="#111" stroke="none" />
        </svg>
      </button>
      <button class="alice">
        Голосовой помощник Алиса
        <svg width="16" height="22" viewBox="0 0 16 22"><rect x="4.500" width="7" height="14" rx="3.500" /><path d="M1.500 10c0 10 13 10 13 0M8 17.500V22" fill="none" stroke="#000" stroke-width="1.500" /></svg>
      </button>
      <div class="apps">
        <button aria-label="Edge">
          <svg width="24" height="24" viewBox="0 0 24 24">
            <defs>
              <linearGradient id="edge" x1="0" y1="0" x2="1" y2=".3"><stop stop-color="#1ba0e2" /><stop offset="1" stop-color="#5fd45c" /></linearGradient>
            </defs>
            <path d="M1 12C1 4.500 6 .500 12.500.500 19 .500 23.500 5 23.500 10c0 4-3 6-6.500 6-2.500 0-3.500-1-3-2 1.500-3-1-6.500-5-6.500C4 7.500 1 10 1 12z" fill="url(#edge)" />
            <path d="M.6 13C.6 9 4 6.500 8 6.500c4 0 7 3 6 6-6-2-7 5-1 9 1 .8 2 1.500 2 1.700C7.500 25 .6 20 .6 13z" fill="#1672c4" />
            <path d="M7 15c0-4 3-6 5.500-5-2 5 2 9 9 7.500-3 5-6 6-8.500 5.500C9.500 22 7 19 7 15z" fill="#0c4a9a" />
          </svg>
        </button>
        <button aria-label="Проводник">
          <svg width="22" height="20" viewBox="0 0 22 20"><path d="M1 1h8l2 3H1z" fill="#e0a21b" /><path d="M1 4h20v13H1z" fill="#fcd462" /><path d="M5 11h12v8h-3v-4H8v4H5z" fill="#3f8fd8" /></svg>
        </button>
        <button aria-label="Почта">
          <svg width="24" height="22" viewBox="0 0 24 22"><path d="M0 8 12 0l12 8v3H0z" fill="#0c59a4" /><path d="M0 8l12 8 12-8v14H0z" fill="#2aa0e8" /><path d="M0 22 24 8v14z" fill="#1687d9" /><path d="M2 7h20l-10 8z" fill="#fff" /></svg>
        </button>
        <button class="open" aria-label="Яндекс Браузер">
          <svg width="22" height="22" viewBox="0 0 22 22">
            <circle cx="11" cy="11" r="11" fill="#fff" />
            <path d="m6 5 5 7v7M11 12l5-7" fill="none" stroke="#f4452a" stroke-width="3" /><path d="m12.500 10 3.500-5" stroke="#f04ab8" stroke-width="3" />
          </svg>
        </button>
      </div>
      <div class="tray">
        <svg width="12" height="8" viewBox="0 0 12 8" fill="none" stroke="#111" stroke-width="1.300"><path d="m1 7 5-5 5 5" /></svg>
        <svg width="14" height="18" viewBox="0 0 14 18" fill="none" stroke="#111" stroke-width="1.200"><path d="M2 6h7v7H2zM9 8.500l3-1.500v5l-3-1.500M3 2.500c3-1.500 5-1.500 8 0M3 16c3 1.500 5 1.500 8 0" /></svg>
        <svg width="14" height="14" viewBox="0 0 14 14" fill="none" stroke="#222" stroke-width="1.100"><path d="M1 13C1 6 6 1 13 1M4 13c0-5 4-9 9-9M7 13c0-3 3-6 6-6" /><circle cx="11.500" cy="11.500" r="1.800" fill="#111" /></svg>
        <svg width="16" height="14" viewBox="0 0 16 14"><path d="M4 4.500h10v7H4zM14.500 6.500H16v3h-1.500z" /><path d="M1 1v3h4V1M3 4v5h2" fill="none" stroke="#111" stroke-width="1.200" /></svg>
        <svg width="16" height="14" viewBox="0 0 16 14" fill="none" stroke="#111" stroke-width="1.100"><path d="M1 5h2l3-3.500v11L3 9H1zM8 5c1 1 1 3 0 4M10 3c2 2 2 6 0 8M12.500 1.500c3 3 3 8 0 11" /></svg>
        <span>РУС</span>
        <div class="clock">16:26<br />05.06.2024</div>
        <button aria-label="Уведомления">
          <svg width="25" height="26" viewBox="0 0 25 26">
            <path d="M1 2h16v12H8l-3 3v-3H1z" /><path d="M3.500 5.500h11M3.500 8h11M3.500 10.500h7" stroke="#d3e2eb" />
            <circle cx="16" cy="17" r="8" fill="#cfd5d8" stroke="#777" />
            <text x="16" y="21.500" text-anchor="middle" font-family="Open Sans" font-size="12">2</text>
          </svg>
        </button>
      </div>
    `;
  }
}

@customElement('app-root')
export class AppRoot extends LitElement {
  static styles = [
    base,
    css`
      :host {
        display: flex;
        flex-direction: column;
        position: relative;
        height: 100vh;
        overflow: hidden;
        background:
          linear-gradient(90deg, transparent 48px, #235c4f 49px, #2b6b5b 40%, #3a6f5a 60%, #32796a 75%, #4a7a6c) top / 100% 48px no-repeat,
          linear-gradient(#22594c, #175650 15%, #10485a 33%, #0b355c 55%, #06255c 78%, #10126a 95%);
      }

      .middle {
        flex: 1;
        min-height: 0;
        display: flex;
      }

      .window {
        flex: 1;
        min-width: 0;
        display: flex;
        flex-direction: column;
        border-radius: 7px 7px 0 0;
        background: #fff;
        overflow: hidden;
      }

      .view {
        flex: 1;
        min-height: 0;
        display: flex;
      }

      .page {
        flex: 1;
        min-width: 0;
        overflow: hidden;
      }

      .scroll {
        display: flex;
        flex-direction: column;
        align-items: center;
        width: 17px;
        padding: 6px 2px;
        background: #f1f1f1;
      }

      .thumb {
        width: 13px;
        height: 50%;
        margin: 5px 0 auto;
        background: #c1c1c1;
      }

      .mark {
        position: absolute;
        left: 14px;
        top: 92px;
        pointer-events: none;
      }

      .mark text {
        font-family: Inter, sans-serif;
        font-weight: 800;
      }

      .domclick {
        position: absolute;
        left: 48px;
        bottom: 34px;
        display: flex;
        align-items: center;
        gap: 8px;
        color: #fff;
        font: 800 35px/50px Inter, sans-serif;
        filter: drop-shadow(0 0 2px rgba(0, 0, 0, 0.12));
        pointer-events: none;
      }
    `,
  ];

  render() {
    return html`
      <tab-strip></tab-strip>
      <div class="middle">
        <side-rail></side-rail>
        <main class="window">
          <address-bar></address-bar>
          <div class="view">
            <div class="page"><site-page></site-page></div>
            <div class="scroll">
              <svg width="7" height="4" viewBox="0 0 7 4" fill="#999"><path d="M3.500 0 7 4H0z" /></svg>
              <span class="thumb"></span>
              <svg width="7" height="4" viewBox="0 0 7 4" fill="#555"><path d="M3.500 4 7 0H0z" /></svg>
            </div>
          </div>
        </main>
      </div>
      <task-bar></task-bar>
      <svg class="mark" width="304" height="136" viewBox="14 92 304 136">
        <path d="M15 133 166 95 317 132V226H15V216H307V140L166 105 25 138V151H15z" fill="#d9ad69" fill-opacity=".5" />
        <text x="10" y="201" font-size="73" fill-opacity=".5">инхаус</text>
      </svg>
      <div class="domclick">
        <svg width="50" height="50" viewBox="0 0 50 50" fill="#fff">
          <path d="M24 2 48 16V27H40V20L24 11 10 20V39H24V50H5C2 50 2 48 2 46V16zM30 28H48L30 46z" />
        </svg>
        Домклик
      </div>
    `;
  }
}
